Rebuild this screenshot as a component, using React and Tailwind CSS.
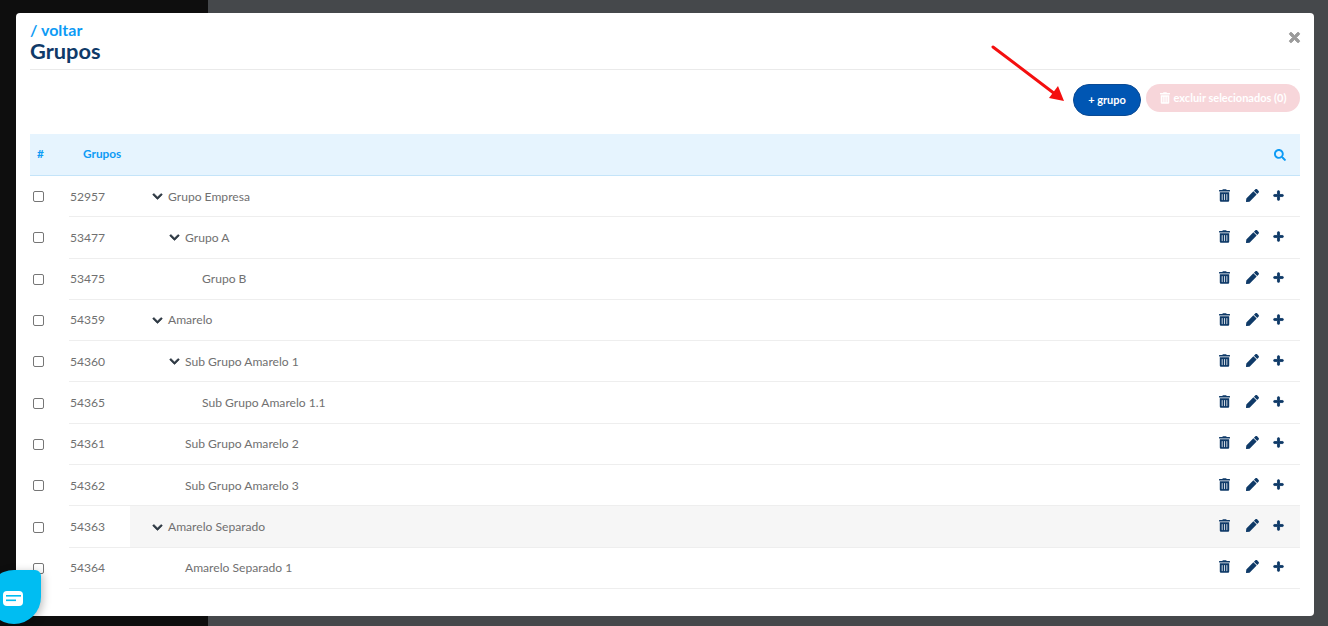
import { FaTrashAlt, FaPen, FaPlus, FaChevronDown, FaSearch, FaTimes } from 'react-icons/fa'

const rows = [
  { id: 52957, name: 'Grupo Empresa', level: 0, open: true },
  { id: 53477, name: 'Grupo A', level: 1, open: true },
  { id: 53475, name: 'Grupo B', level: 2 },
  { id: 54359, name: 'Amarelo', level: 0, open: true },
  { id: 54360, name: 'Sub Grupo Amarelo 1', level: 1, open: true },
  { id: 54365, name: 'Sub Grupo Amarelo 1.1', level: 2 },
  { id: 54361, name: 'Sub Grupo Amarelo 2', level: 1 },
  { id: 54362, name: 'Sub Grupo Amarelo 3', level: 1 },
  { id: 54363, name: 'Amarelo Separado', level: 0, open: true, hover: true },
  { id: 54364, name: 'Amarelo Separado 1', level: 1 },
]

const indent = ['pl-[22px]', 'pl-[39px]', 'pl-[56px]']

function Row({ row }) {
  return (
    <div className="flex h-[41.3px]">
      <div className="w-[39px] flex items-center pl-[3px] shrink-0">
        <span className="w-[11px] h-[11px] border border-[#767676] rounded-[2px] bg-white" />
      </div>
      <div className="flex-1 flex border-b border-[#eeeeee]">
        <div className="w-[61px] flex items-center pl-px pt-px text-[#707070] shrink-0">{row.id}</div>
        <div className={`flex-1 flex items-center pt-px ${indent[row.level]} ${row.hover ? 'bg-[#f6f6f6]' : ''}`}>
          {row.open
            ? <FaChevronDown className="w-[11px] h-[11px] mr-[5px] text-[#2f3a44] stroke-[30px]" />
            : <span className="w-[16px]" />}
          <span className="text-[#707070]">{row.name}</span>
        </div>
        <div className={`w-[100px] flex items-center justify-end pr-[16px] pb-[2px] text-[#0f3a68] shrink-0 ${row.hover ? 'bg-[#f6f6f6]' : ''}`}>
          <FaTrashAlt className="w-[11px] h-[13px] mr-[16px]" />
          <FaPen className="w-[13px] h-[13px] mr-[14px]" />
          <FaPlus className="w-[11px] h-[11px] stroke-[40px]" />
        </div>
      </div>
    </div>
  )
}

export default function App() {
  return (
    <div className="relative w-[1328px] h-[626px] overflow-hidden flex font-['Lato',sans-serif] text-[12.1px]">
      <div className="w-[208px] bg-[#0e0e0e]" />
      <div className="flex-1 bg-[#45484b]" />

      <div className="absolute left-[16px] top-[13px] w-[1298px] h-[603px] bg-white rounded-[4px] px-[14px] pt-[8px]">
        <div className="relative h-[49px] border-b border-[#eaeaea]">
          <a className="block text-[16px] leading-[18px] font-bold text-[#0d9bf5]">/ voltar</a>
          <h1 className="text-[21.8px] leading-[24px] font-bold text-[#0f3a68]">Grupos</h1>
          <FaTimes className="absolute right-[-1px] top-[9px] w-[13px] h-[15px] text-[#9b9b9b] stroke-[30px]" />
        </div>

        <div className="flex justify-end items-start gap-[5px] mt-[14px] h-[50px]">
          <button className="w-[68px] h-[32px] rounded-full bg-[#0056b3] border border-[#0a4a94] text-white text-[11px] font-bold">+ grupo</button>
          <button className="w-[154px] h-[28px] rounded-full bg-[#f7d6da] text-white text-[11px] font-bold flex items-center justify-center gap-[4px]">
            <FaTrashAlt className="w-[10px] h-[12px]" />
            excluir selecionados (0)
          </button>
        </div>

        <div className="flex items-center h-[42px] bg-[#e6f4fe] border-b border-[#c4e4f9] text-[#0d9bf5] font-bold text-[11.8px]">
          <span className="w-[53px] pl-[7px] pb-[2px]">#</span>
          <span className="flex-1 pb-[2px]">Grupos</span>
          <FaSearch className="w-[12px] h-[12px] mr-[14px]" />
        </div>

        {rows.map((row) => <Row key={row.id} row={row} />)}
      </div>

      {/* annotation arrow */}
      <svg className="absolute left-[985px] top-[40px]" width="85" height="65" viewBox="0 0 85 65" fill="none">
        <line x1="8" y1="7" x2="70" y2="54" stroke="#f40f0f" strokeWidth="3" strokeLinecap="round" />
        <path d="M79 61 L64 58 L73 46 Z" fill="#f40f0f" />
      </svg>

      {/* chat widget */}
      <div className="absolute left-[-13px] top-[570px] w-[54px] h-[54px] bg-[#00bdf2] rounded-t-[27px] rounded-tr-[6px] rounded-b-[27px] shadow-[2px_2px_8px_rgba(0,0,0,0.25)] flex items-center justify-center">
        <svg className="mr-[3px] mt-[2px]" width="20" height="15" viewBox="0 0 20 15">
          <rect width="20" height="15" rx="4" fill="#fff" />
          <rect x="3" y="4" width="15" height="1.6" fill="#00bdf2" />
          <rect x="3" y="8.5" width="10" height="1.6" fill="#00bdf2" />
        </svg>
      </div>
    </div>
  )
}
